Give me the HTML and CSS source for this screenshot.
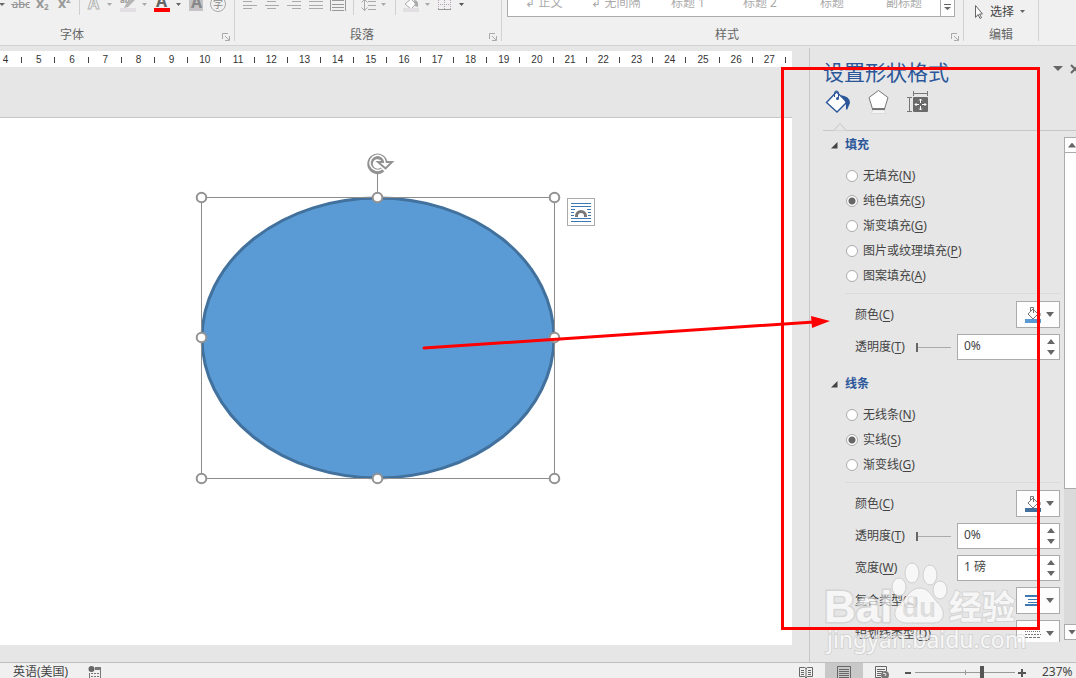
FILE: index.html
```
<!DOCTYPE html>
<html lang="zh-CN">
<head>
<meta charset="utf-8">
<title>设置形状格式</title>
<link rel="stylesheet" href="styles.css">
</head>
<body>
<div class="app">
  <header class="ribbon">
    <section class="group group-font">
      <div class="tools">
        <button aria-label="下划线"><svg width="8" height="16" viewBox="0 0 8 16"><path d="M-1 3h6L2 6z" fill="#666"/></svg></button>
        <button aria-label="删除线"><svg width="24" height="16" viewBox="8 0 24 16"><text x="12" y="8" class="t-abc">abc</text><path d="M11 4.500h18" stroke="#999"/></svg></button>
        <button aria-label="下标"><svg width="22" height="16" viewBox="32 0 22 16"><text x="36" y="8" class="t-x">x</text><text x="44" y="10" class="t-s">2</text></svg></button>
        <button aria-label="上标"><svg width="22" height="16" viewBox="54 0 22 16"><text x="58" y="8" class="t-x">x</text><text x="66" y="3" class="t-s">2</text></svg></button>
        <svg width="8" height="16" viewBox="76 0 8 16"><path d="M79.500 0v15" stroke="#cfcfcf"/></svg>
        <button aria-label="文本效果"><svg width="20" height="16" viewBox="84 0 20 16"><text x="88" y="9" class="t-a" fill="#f8f8f8" stroke="#b4b4b4">A</text></svg></button>
        <button aria-label="文本效果选项"><svg width="12" height="16" viewBox="104 0 12 16"><path d="M107 3h5l-2.500 3z" fill="#aaa"/></svg></button>
        <button aria-label="突出显示"><svg width="24" height="16" viewBox="116 0 24 16"><text x="120" y="3" class="t-s">ab</text><path d="M135 0l-7 7-4 1 2-4 5-5" fill="#b5b5b5"/><path d="M120 8h16v4h-16z" fill="#e2dfe2"/></svg></button>
        <button aria-label="突出显示选项"><svg width="10" height="16" viewBox="140 0 10 16"><path d="M142 3h5l-2.500 3z" fill="#aaa"/></svg></button>
        <button aria-label="字体颜色"><svg width="24" height="16" viewBox="150 0 24 16"><text x="156" y="7" class="t-a" fill="#666">A</text><path d="M154 8h16v4h-16z" fill="#f00"/></svg></button>
        <button aria-label="字体颜色选项"><svg width="12" height="16" viewBox="174 0 12 16"><path d="M176 3h5l-2.500 3z" fill="#666"/></svg></button>
        <button aria-label="字符底纹"><svg width="21" height="16" viewBox="186 0 21 16"><path d="M189 0h14v11h-14z" fill="#c5c3c5"/><text x="191" y="8" class="t-a" fill="#888">A</text></svg></button>
        <button aria-label="带圈字符"><svg width="23" height="16" viewBox="207 0 23 16"><circle cx="218" cy="4" r="7.500" fill="none" stroke="#aaa"/><text x="213" y="8" class="t-zi">字</text></svg></button>
      </div>
      <div class="group-foot"><span class="group-name">字体</span><button class="launcher" aria-label="字体设置"><svg width="8" height="8" viewBox="0 0 8 8"><path d="M.5 6V.5H6M3 3l4 4M7.500 3v4.500H3" fill="none" stroke="#aaa"/></svg></button></div>
    </section>
    <section class="group group-para">
      <div class="tools">
        <button aria-label="左对齐"><svg width="26" height="16" viewBox="235 0 26 16"><path d="M243 1.500h9M243 5.500h14M243 8.500h9" stroke="#aaa"/></svg></button>
        <button aria-label="居中"><svg width="22" height="16" viewBox="261 0 22 16"><path d="M267 1.500h9M265 5.500h14M267 8.500h9" stroke="#aaa"/></svg></button>
        <button aria-label="右对齐"><svg width="22" height="16" viewBox="283 0 22 16"><path d="M292 1.500h9M287 5.500h14M292 8.500h9" stroke="#aaa"/></svg></button>
        <button aria-label="两端对齐"><svg width="22" height="16" viewBox="305 0 22 16"><path d="M309 1.500h14M309 5.500h14M309 8.500h14" stroke="#aaa"/></svg></button>
        <button aria-label="分散对齐"><svg width="24" height="16" viewBox="327 0 24 16"><path d="M330.500 0v11M345.500 0v11M332 .5h12M332 4.500h12M332 7.500h12M332 10.500h12" stroke="#999" fill="none"/></svg></button>
        <svg width="6" height="16" viewBox="351 0 6 16"><path d="M353.500 0v15" stroke="#cfcfcf"/></svg>
        <button aria-label="行距"><svg width="23" height="16" viewBox="357 0 23 16"><path d="M364.500 0v11M361.500 7.500l3 3 3-3M361.500 2.500l3-3 3 3M368 1.500h8M368 5.500h8M368 9.500h8" stroke="#aaa" fill="none"/></svg></button>
        <button aria-label="行距选项"><svg width="13" height="16" viewBox="380 0 13 16"><path d="M381 3h5l-2.500 3z" fill="#aaa"/></svg></button>
        <svg width="6" height="16" viewBox="393 0 6 16"><path d="M395.500 0v15" stroke="#cfcfcf"/></svg>
        <button aria-label="底纹"><svg width="24" height="16" viewBox="399 0 24 16"><path d="M411-1l5 5-5 5-6-5z" fill="#fafafa" stroke="#aaa"/><path d="M414 0q5 0 4 7l-3-1z" fill="#aaa"/><path d="M403 8h16v4h-16z" fill="#e2dfe2"/></svg></button>
        <button aria-label="底纹选项"><svg width="12" height="16" viewBox="423 0 12 16"><path d="M425 3h5l-2.500 3z" fill="#aaa"/></svg></button>
        <button aria-label="边框"><svg width="22" height="16" viewBox="435 0 22 16"><path d="M438.500 0v9M444.500 0v9M450.500 0v9M438 4.500h13" stroke="#b3a3b3" stroke-dasharray="1 1"/><path d="M438 9.500h13" stroke="#999"/></svg></button>
        <button aria-label="边框选项"><svg width="12" height="16" viewBox="457 0 12 16"><path d="M459 3h5l-2.500 3z" fill="#555"/></svg></button>
      </div>
      <div class="group-foot"><span class="group-name">段落</span><button class="launcher" aria-label="段落设置"><svg width="8" height="8" viewBox="0 0 8 8"><path d="M.5 6V.5H6M3 3l4 4M7.500 3v4.500H3" fill="none" stroke="#aaa"/></svg></button></div>
    </section>
    <section class="group group-style">
      <div class="gallery">
        <button class="style-name">↲ 正文</button><button class="style-name">↲ 无间隔</button><button class="style-name">标题 1</button><button class="style-name">标题 2</button><button class="style-name">标题</button><button class="style-name">副标题</button>
        <button class="gallery-more" aria-label="其他样式"><svg width="13" height="16" viewBox="0 0 13 16"><path d="M3 4.500h7" stroke="#666"/><path d="M3 7h7l-3.500 3z" fill="#666"/></svg></button>
      </div>
      <div class="group-foot"><span class="group-name">样式</span><button class="launcher" aria-label="样式设置"><svg width="8" height="8" viewBox="0 0 8 8"><path d="M.5 6V.5H6M3 3l4 4M7.500 3v4.500H3" fill="none" stroke="#aaa"/></svg></button></div>
    </section>
    <section class="group group-edit">
      <button class="select-btn"><svg width="10" height="16" viewBox="0 0 10 16"><path d="M1.500 1.500v12l2.500-3 2 4 1.500-.8-2-3.700h3z" fill="#fff" stroke="#666"/></svg>选择<svg width="6" height="4" viewBox="0 0 6 4"><path d="M0 0h5L2.500 3z" fill="#666"/></svg></button>
      <div class="group-foot"><span class="group-name">编辑</span></div>
    </section>
  </header>

  <div class="workspace">
    <main class="editor">
      <div class="ruler">
        <span>4</span><span>5</span><span>6</span><span>7</span><span>8</span><span>9</span><span>10</span><span>11</span><span>12</span><span>13</span><span>14</span><span>15</span><span>16</span><span>17</span><span>18</span><span>19</span><span>20</span><span>21</span><span>22</span><span>23</span><span>24</span><span>25</span><span>26</span><span>27</span>
      </div>
      <div class="sheet">
        <svg class="shape" width="600" height="400" viewBox="0 118 600 400">
          <ellipse cx="378" cy="338" rx="176" ry="140" fill="#5b9bd5" stroke="#41719c" stroke-width="3"/>
          <path d="M201.500 197.500h353v281h-353zM377.500 174v20" fill="none" stroke="#8c8c8c"/>
          <g fill="#fff" stroke="#929292" stroke-width="2"><circle cx="201.500" cy="197.500" r="4.800"/><circle cx="377.500" cy="197.500" r="4.800"/><circle cx="554.500" cy="197.500" r="4.800"/><circle cx="201.500" cy="337.500" r="4.800"/><circle cx="554.500" cy="337.500" r="4.800"/><circle cx="201.500" cy="478.500" r="4.800"/><circle cx="377.500" cy="478.500" r="4.800"/><circle cx="554.500" cy="478.500" r="4.800"/></g>
          <path d="M382.500 169.500a7.500 7.500 0 1 1 2.500-6" fill="none" stroke="#929292" stroke-width="5.500"/>
          <path d="M378 162h14l-6.500 6.500z" fill="#fff" stroke="#929292" stroke-width="2"/>
          <path d="M381.800 169a7.500 7.500 0 1 1 3.200-6v2" fill="none" stroke="#fff" stroke-width="1.500"/>
        </svg>
        <button class="layout-options" aria-label="布局选项"><svg width="26" height="26" viewBox="0 0 26 26"><path d="M3 4.500h20M3 7.500h20M3 10.500h4M19 10.500h4M3 13.500h3M20 13.500h3M3 16.500h3M20 16.500h3M3 19.500h20M3 22.500h20" stroke="#3c78b4"/><path d="M8.500 18v-1a4.500 4.500 0 0 1 9 0v1" fill="none" stroke="#777" stroke-width="3"/></svg></button>
      </div>
    </main>

    <aside class="pane">
      <div class="pane-head"><h1 class="pane-title">设置形状格式</h1>
        <button aria-label="任务窗格选项"><svg width="10" height="6" viewBox="0 0 10 6"><path d="M0 0h10L5 5z" fill="#666"/></svg></button>
        <button class="close" aria-label="关闭"><svg width="8" height="10" viewBox="0 0 8 10"><path d="M1 1l8 8M9 1l-8 8" stroke="#666" stroke-width="2"/></svg></button>
      </div>
      <nav class="pane-tabs">
        <button aria-label="填充与线条"><svg width="32" height="30" viewBox="825 85 32 30"><path d="M838.500 91l10.500 10-10 10-10.500-9.500z" fill="#fff" stroke="#2b579a" stroke-width="1.400"/><path d="M836.500 96v-4q0-2 2-2t2 2v5" fill="none" stroke="#2b579a"/><circle cx="839.500" cy="97.500" r="1.500" fill="#2b579a"/><path d="M842 94q10 1 10 8l-3 7-1-1q1-8-6-14z" fill="#2b579a"/></svg></button>
        <button aria-label="效果"><svg width="32" height="30" viewBox="865 85 32 30"><path d="M875 109h11l1.500 3.500h-14z" fill="#f4f4f4" stroke="#ccc" stroke-width=".5"/><path d="M880.500 89.500l9.500 7-3.500 11.500h-12L871 96.500z" fill="#fff" stroke="#777"/><path d="M874 108h13" stroke="#777" stroke-width="2"/></svg></button>
        <button aria-label="布局属性"><svg width="32" height="30" viewBox="905 85 32 30"><path d="M915.500 90v5M929.500 90v5M915 92.500h15M909 96.500h5M909 110.500h5M911.500 96v15" stroke="#777"/><rect x="915" y="96" width="15" height="15" rx="1" fill="#6a6a6a"/><path d="M922.500 98v4M922.500 105v4M917 103.500h4M924 103.500h4M921 99.500l1.500-1.500 1.500 1.500M921 107.500l1.500 1.500 1.500-1.500M918.500 102l-1.500 1.500 1.500 1.500M926.500 102l1.500 1.500-1.500 1.500" fill="none" stroke="#fff"/></svg></button>
      </nav>
      <div class="tab-line"><svg width="24" height="9" viewBox="0 0 24 9"><path d="M0 8.500h11l6-7 6 7h1" fill="#e6e6e6" stroke="#c6c6c6"/></svg></div>
      <div class="pane-body">
        <form class="options">
          <h2 class="heading"><svg width="7" height="7" viewBox="0 0 7 7"><path d="M6.500 0v6.500H0z" fill="#444"/></svg>填充</h2>
          <div class="radios">
            <label><input type="radio" name="fill"><span>无填充(<u>N</u>)</span></label>
            <label><input type="radio" name="fill" checked><span>纯色填充(<u>S</u>)</span></label>
            <label><input type="radio" name="fill"><span>渐变填充(<u>G</u>)</span></label>
            <label><input type="radio" name="fill"><span>图片或纹理填充(<u>P</u>)</span></label>
            <label><input type="radio" name="fill"><span>图案填充(<u>A</u>)</span></label>
          </div>
          <div class="rows">
            <div class="row"><label for="fc">颜色(<u>C</u>)</label><button type="button" id="fc" class="pick"><svg width="18" height="18" viewBox="0 0 18 18"><path d="M9 3l5 5-5 5-5-5z" fill="#fff" stroke="#777"/><path d="M6.500 5V1.500h3V7M14 5q3 2 2 5" fill="none" stroke="#777"/><path d="M1 13h16v4H1z" fill="#5b9bd5"/></svg><i></i></button></div>
            <div class="row"><label for="ft">透明度(<u>T</u>)</label><input type="range" value="0" aria-label="填充透明度"><span class="spin"><input type="text" id="ft" value="0%"><span class="steps"><button type="button" aria-label="增加"><i class="up"></i></button><button type="button" aria-label="减少"><i></i></button></span></span></div>
          </div>
          <h2 class="heading next"><svg width="7" height="7" viewBox="0 0 7 7"><path d="M6.500 0v6.500H0z" fill="#444"/></svg>线条</h2>
          <div class="radios">
            <label><input type="radio" name="line"><span>无线条(<u>N</u>)</span></label>
            <label><input type="radio" name="line" checked><span>实线(<u>S</u>)</span></label>
            <label><input type="radio" name="line"><span>渐变线(<u>G</u>)</span></label>
          </div>
          <div class="rows">
            <div class="row"><label for="lc">颜色(<u>C</u>)</label><button type="button" id="lc" class="pick"><svg width="18" height="18" viewBox="0 0 18 18"><path d="M9 3l5 5-5 5-5-5z" fill="#fff" stroke="#777"/><path d="M6.500 5V1.500h3V7M14 5q3 2 2 5" fill="none" stroke="#777"/><path d="M1 13h16v4H1z" fill="#41719c"/></svg><i></i></button></div>
            <div class="row"><label for="lt">透明度(<u>T</u>)</label><input type="range" value="0" aria-label="线条透明度"><span class="spin"><input type="text" id="lt" value="0%"><span class="steps"><button type="button" aria-label="增加"><i class="up"></i></button><button type="button" aria-label="减少"><i></i></button></span></span></div>
            <div class="row"><label for="lw">宽度(<u>W</u>)</label><span class="spin"><input type="text" id="lw" value="1 磅"><span class="steps"><button type="button" aria-label="增加"><i class="up"></i></button><button type="button" aria-label="减少"><i></i></button></span></span></div>
            <div class="row"><label for="lk">复合类型(<u>C</u>)</label><button type="button" id="lk" class="pick"><svg width="18" height="18" viewBox="0 0 18 18"><path d="M1 4h13M1 13h13" stroke="#3c78b4" stroke-width="2"/><path d="M4 7.500h10M4 10.500h10" stroke="#3c78b4"/></svg><i></i></button></div>
            <div class="row"><label for="ld">短划线类型(<u>D</u>)</label><button type="button" id="ld" class="pick"><svg width="18" height="18" viewBox="0 0 18 18"><path d="M1 6.500h16" stroke="#777" stroke-dasharray="1 1"/><path d="M1 9.500h16" stroke="#777" stroke-dasharray="2 1"/><path d="M1 12.500h16" stroke="#777" stroke-dasharray="3 1"/></svg><i></i></button></div>
          </div>
        </form>
        <div class="scroll"><button aria-label="向上滚动"><i class="up"></i></button><div class="thumb"></div><div class="track"></div><button aria-label="向下滚动"><i></i></button></div>
      </div>
    </aside>
  </div>

  <footer class="status">
    <button class="lang">英语(美国)</button>
    <button aria-label="宏录制"><svg width="14" height="14" viewBox="0 0 14 14"><circle cx="3.500" cy="4" r="3" fill="#666"/><path d="M7 2h6v3H7zM1 8v6h1V8zM12 5h1v9h-1z" fill="#777"/><path d="M3 8.500h9M3 11.500h9" stroke="#777" stroke-dasharray="2 1"/></svg></button>
    <span class="space"></span>
    <button class="view" aria-label="阅读视图"><svg width="14" height="14" viewBox="0 0 14 14"><path d="M.5 2.500h5l1.500 1 1.500-1h5v9h-5L7 13l-1.500-1.500h-5zM7 3v10M2 5.500h3M2 7.500h3M2 9.500h3M9 5.500h3M9 7.500h3M9 9.500h3" fill="none" stroke="#666"/></svg></button>
    <button class="view active" aria-label="页面视图"><svg width="14" height="14" viewBox="0 0 14 14"><path d="M.5 14V1.500h13V14M2 4.500h10M2 6.500h10M2 8.500h10M2 10.500h10M2 12.500h10" fill="none" stroke="#666"/></svg></button>
    <button class="view" aria-label="Web 视图"><svg width="14" height="14" viewBox="0 0 14 14"><path d="M6 12.500H.5v-11h11V6M2 4.500h8M2 6.500h6M2 8.500h4M2 10.500h4" fill="none" stroke="#666"/><circle cx="10" cy="10" r="4" fill="#777"/><path d="M8 8l3 1-1 2" fill="none" stroke="#eee"/></svg></button>
    <button class="zoom-btn" aria-label="缩小"><svg width="10" height="10" viewBox="0 0 10 10"><path d="M2 5h6" stroke="#555" stroke-width="2"/></svg></button>
    <input class="zoom" type="range" min="0" max="100" value="68" aria-label="显示比例">
    <button class="zoom-btn" aria-label="放大"><svg width="10" height="10" viewBox="0 0 10 10"><path d="M1 5h8M5 1v8" stroke="#555" stroke-width="2"/></svg></button>
    <span class="percent">237%</span>
  </footer>

  <svg class="overlay" width="1076" height="678" viewBox="0 0 1076 678" aria-hidden="true">
    <g class="mark">
      <text x="824" y="622" class="m-baidu">Bai</text>
      <text x="949" y="619" class="m-cn">经验</text>
      <text x="827" y="648" class="m-url">jingyan.baidu.com</text>
    </g>
    <g class="paw">
      <ellipse cx="899" cy="587" rx="7" ry="9"/><ellipse cx="912" cy="573" rx="7" ry="10"/><ellipse cx="930" cy="575" rx="7" ry="10"/><ellipse cx="940" cy="590" rx="7" ry="9"/>
      <path d="M920 588c9 0 12 9 18 15 9 9 6 20-5 20h-26c-13 0-16-12-7-19 7-6 10-16 20-16z"/>
      <text x="902" y="617" class="m-du">du</text>
    </g>
    <rect x="782.500" y="68.500" width="256" height="560" fill="none" stroke="#f00" stroke-width="3"/>
    <path d="M424 348L814 322" stroke="#f00" stroke-width="3" stroke-linecap="round"/><path d="M830 321l-18 7-1-12z" fill="#f00"/>
  </svg>
</div>
</body>
</html>
```
FILE: styles.css
```
* { box-sizing: border-box; }
body { margin: 0; font: 12px/16px "Noto Sans", "Noto Sans CJK SC", sans-serif; color: #444; background: #e6e6e6; }
button { margin: 0; padding: 0; border: 0; background: none; font: inherit; color: inherit; }
svg { display: block; flex: none; }
h1, h2 { margin: 0; }
i { display: block; width: 8px; height: 5px; background: #666; clip-path: polygon(0 0, 100% 0, 50% 100%); }
i.up { clip-path: polygon(50% 0, 100% 100%, 0 100%); }
u { text-underline-offset: 2px; }
.app { position: relative; display: flex; flex-direction: column; height: 100vh; overflow: hidden; }

.ribbon { display: flex; flex: none; height: 46px; background: #f0f0f0; border-bottom: 1px solid #d2d2d2; }
.group { display: flex; flex-direction: column; justify-content: space-between; height: 41px; border-right: 1px solid #d2d2d2; }
.group-font { width: 235px; }
.group-para { width: 267px; }
.group-style { width: 462px; padding: 0 8px 0 5px; }
.group-edit { width: 75px; }
.tools { display: flex; height: 16px; }
.group-foot { display: flex; align-items: flex-end; height: 14px; color: #666; }
.group-name { flex: 1; text-align: center; line-height: 12px; }
.group-font .group-name { flex: 0 0 144px; }
.group-font .group-foot { justify-content: space-between; }
.launcher { padding-right: 4px; }
.group-style .group-name { padding-right: 4px; }
.group-style .launcher { margin-right: -8px; }
.t-abc { font: 11px "Noto Sans"; fill: #888; }
.t-x { font: bold 14px "Noto Sans"; fill: #999; }
.t-s { font: bold 8px "Noto Sans"; fill: #999; }
.t-a { font: bold 16px "Noto Sans"; }
.t-zi { font: 10px "Noto Sans CJK SC"; fill: #888; }
.gallery { display: flex; height: 17px; overflow: hidden; background: #fff; border: 1px solid #ababab; border-top: 0; }
.style-name { flex: 1; height: 16px; margin-top: -5px; line-height: 16px; color: #aaa; white-space: nowrap; }
.gallery-more { width: 14px; border-left: 1px solid #ababab; }
.select-btn { display: flex; align-items: center; gap: 6px; height: 24px; padding-left: 10px; }

.workspace { display: flex; flex: 1; min-height: 0; }
.editor { display: flex; flex-direction: column; flex: 1; min-width: 0; margin-right: 17px; padding: 5px 0 17px; overflow: hidden; }
.ruler { display: grid; grid-template-columns: repeat(24, 1fr); flex: none; height: 16px; padding-right: 6px; margin-left: -11px; background: #fff; font: 10px/18px "Liberation Sans", sans-serif; color: #333; text-align: center; }
.ruler span { background: linear-gradient(#444, #444) right 6px / 1px 6px no-repeat; }
.sheet { position: relative; flex: 1; margin-top: 50px; background: #fff; border-top: 1px solid #c6c6c6; }
.shape { position: absolute; left: 0; top: 0; }
.layout-options { position: absolute; left: 567px; top: 80px; border: 1px solid #aaa; background: #fff; }

.pane { display: flex; flex-direction: column; flex: 0 0 267px; margin-top: 2px; padding: 12px 0 20px 13px; border-left: 1px solid #c6c6c6; overflow: hidden; }
.pane-head { display: flex; height: 26px; }
.pane-title { flex: 1; font-size: 21px; line-height: 24px; font-weight: 400; color: #2b579a; white-space: nowrap; }
.pane-head button { height: 18px; margin-right: 7px; }
.pane-head .close { margin-right: -2px; }
.pane-tabs { display: flex; gap: 8px; height: 36px; }
.pane-tabs button { height: 30px; }
.tab-line { flex: none; height: 9px; border-bottom: 1px solid #c6c6c6; }
.pane-body { display: flex; flex: 1; gap: 4px; min-height: 0; }
.options { flex: 1; padding-top: 3px; overflow: hidden; }
.heading { display: flex; align-items: center; gap: 7px; height: 22px; padding-left: 8px; font-size: 12px; color: #2b579a; }
.next { margin-top: 13px; }
.radios { margin: 7px 0 5px; padding-left: 23px; }
.radios label { display: flex; align-items: center; gap: 5px; height: 25px; }
.radios input { appearance: none; width: 12px; height: 12px; margin: 0; border: 1px solid #ababab; border-radius: 50%; background: #fff; }
.radios input:checked { background: radial-gradient(circle, #666 0 3px, #fff 4px); }
.rows { display: flex; flex-direction: column; gap: 6px; margin-left: 22px; padding: 7px 0 0 10px; border-top: 1px solid #dadada; }
.row { display: flex; align-items: center; }
.row label { flex: 1; white-space: nowrap; }
.pick { display: flex; align-items: center; gap: 4px; width: 44px; height: 27px; padding-left: 7px; border: 1px solid #ababab; background: #fdfdfd; }
.spin { display: flex; width: 103px; height: 26px; border: 1px solid #ababab; background: #fff; }
.spin input { flex: 1; min-width: 0; border: 0; padding: 0 0 2px 6px; font: inherit; color: #444; background: none; }
.steps { display: flex; flex-direction: column; justify-content: center; gap: 6px; width: 12px; }
.row input[type="range"] { appearance: none; width: 35px; height: 9px; margin: 0 6px 0 0; background: linear-gradient(#ababab, #ababab) center / 100% 1px no-repeat; }
.row input[type="range"]::-webkit-slider-thumb { appearance: none; width: 2px; height: 9px; background: #666; }
.scroll { display: flex; flex-direction: column; width: 12px; margin: 6px 0 2px; overflow: hidden; }
.scroll button { display: flex; flex: none; align-items: center; width: 16px; height: 16px; padding-left: 3px; border: 1px solid #ababab; background: #fff; }
.thumb { flex: 336; width: 16px; border: 1px solid #ababab; border-top: 0; background: #fff; }
.track { flex: 136; background: #dadada; }

.status { display: flex; flex: none; align-items: flex-start; height: 16px; overflow: hidden; background: #f0f0f0; border-top: 1px solid #bebebe; line-height: 18px; }
.status button { flex: none; padding-top: 2px; }
.status .lang { padding: 0 20px 0 13px; }
.space { flex: 1; }
.status .view { display: flex; width: 38px; height: 18px; justify-content: center; }
.status .active { background: #c8c8c8; }
.status .zoom-btn { width: 14px; padding: 5px 2px; }
.zoom { appearance: none; width: 100px; height: 18px; margin: 0; background: linear-gradient(#999, #999) center / 100% 1px no-repeat, linear-gradient(#999, #999) center / 1px 5px no-repeat; }
.zoom::-webkit-slider-thumb { appearance: none; width: 4px; height: 12px; background: #555; }
.percent { width: 47px; padding-left: 13px; white-space: nowrap; }

.overlay { position: absolute; left: 0; top: 0; pointer-events: none; }
.mark { fill: #fff; stroke: #ccc; paint-order: stroke; opacity: .65; }
.paw { fill: #fafafa; stroke: #ccc; opacity: .85; }
.m-baidu { font: bold 44px "Liberation Sans"; stroke-width: 3; }
.paw .m-du { font: bold 28px "Liberation Sans"; fill: #ddd; stroke: none; }
.m-cn { font: bold 33px "Noto Sans CJK SC"; stroke-width: 2; }
.m-url { font: 23px "Noto Sans"; stroke-width: 2; }
```
